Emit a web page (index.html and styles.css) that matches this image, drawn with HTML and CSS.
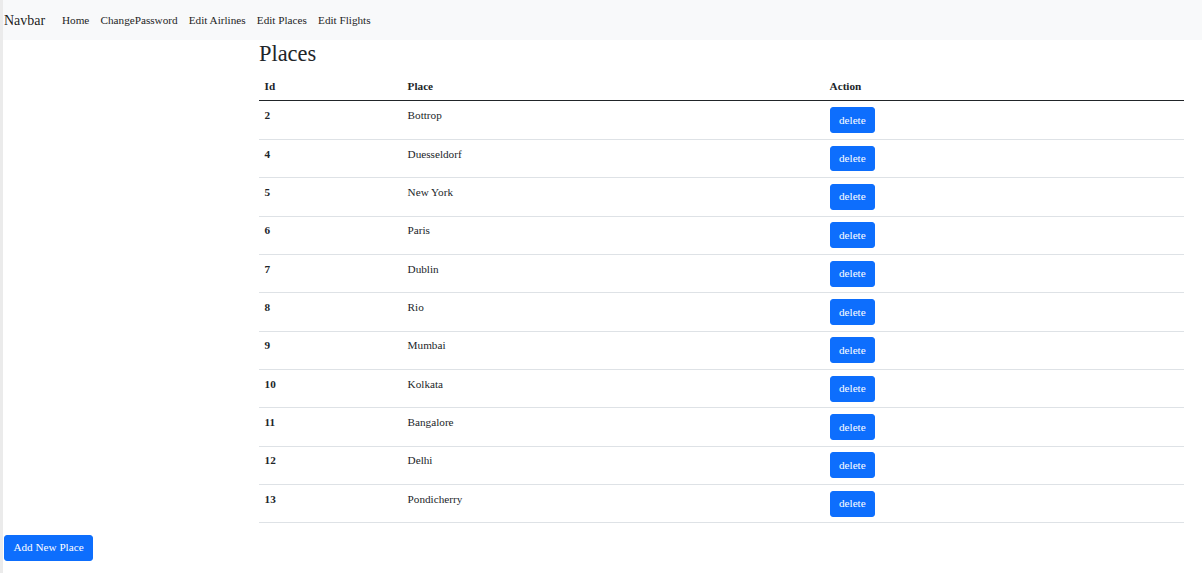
FILE: index.html
```html
<!DOCTYPE html>
<html lang="en">
<head>
<meta charset="utf-8">
<title>Places</title>
<link rel="stylesheet" href="styles.css">
</head>
<body>
<div class="page">
  <nav class="navbar">
    <a class="brand" href="#">Navbar</a>
    <ul class="nav-links">
      <li><a href="#">Home</a></li>
      <li><a href="#">ChangePassword</a></li>
      <li><a href="#">Edit Airlines</a></li>
      <li><a href="#">Edit Places</a></li>
      <li><a href="#">Edit Flights</a></li>
    </ul>
  </nav>
  <main class="content">
    <h2 class="title">Places</h2>
    <table class="table">
      <colgroup>
        <col class="col-id">
        <col class="col-place">
        <col class="col-action">
      </colgroup>
      <thead>
        <tr><th>Id</th><th>Place</th><th>Action</th></tr>
      </thead>
      <tbody>
        <tr><th>2</th><td>Bottrop</td><td><button class="btn">delete</button></td></tr>
        <tr><th>4</th><td>Duesseldorf</td><td><button class="btn">delete</button></td></tr>
        <tr><th>5</th><td>New York</td><td><button class="btn">delete</button></td></tr>
        <tr><th>6</th><td>Paris</td><td><button class="btn">delete</button></td></tr>
        <tr><th>7</th><td>Dublin</td><td><button class="btn">delete</button></td></tr>
        <tr><th>8</th><td>Rio</td><td><button class="btn">delete</button></td></tr>
        <tr><th>9</th><td>Mumbai</td><td><button class="btn">delete</button></td></tr>
        <tr><th>10</th><td>Kolkata</td><td><button class="btn">delete</button></td></tr>
        <tr><th>11</th><td>Bangalore</td><td><button class="btn">delete</button></td></tr>
        <tr><th>12</th><td>Delhi</td><td><button class="btn">delete</button></td></tr>
        <tr><th>13</th><td>Pondicherry</td><td><button class="btn">delete</button></td></tr>
      </tbody>
    </table>
  </main>
  <div class="actions">
    <button class="btn">Add New Place</button>
  </div>
</div>
</body>
</html>
```

FILE: styles.css
```css
html, body {
  margin: 0;
  padding: 0;
  background: #fff;
}

body {
  font-family: "Liberation Serif", "Times New Roman", serif;
  font-size: 11.2px;
  line-height: 1.5;
  color: #212529;
}

.page {
  min-height: 573px;
  border-left: 3px solid #ebebeb;
  box-sizing: border-box;
}

.navbar {
  display: flex;
  align-items: center;
  height: 40px;
  background: #f8f9fa;
  padding-left: 1px;
}

.brand {
  font-size: 14px;
  line-height: 21px;
  color: rgba(0, 0, 0, 0.9);
  text-decoration: none;
  margin-right: 11.2px;
}

.nav-links {
  display: flex;
  list-style: none;
  margin: 0;
  padding: 0;
}

.nav-links a {
  display: block;
  padding: 5.6px 5.6px;
  color: #1e1e1e;
  text-decoration: none;
}

.content {
  margin-left: 256px;
  width: 925px;
}

.title {
  margin: 0 0 4.6px 0;
  padding-top: 1px;
  font-size: 22.4px;
  font-weight: 400;
  line-height: 1.2;
}

.table {
  width: 100%;
  border-collapse: collapse;
  margin-bottom: 11.2px;
  vertical-align: top;
}

.col-id { width: 143px; }
.col-place { width: 422px; }
.col-action { width: 360px; }

.table th,
.table td {
  text-align: left;
  padding: 5.6px;
  border-bottom: 1px solid #dee2e6;
  vertical-align: top;
}

.table thead th {
  border-bottom: 1.5px solid #212529;
}

.table tbody th,
.table tbody td {
  padding-top: 5.7px;
  padding-bottom: 5.7px;
}

.btn {
  display: inline-block;
  font-family: inherit;
  font-size: 11.2px;
  line-height: 16.8px;
  color: #fff;
  background: #0d6efd;
  border: 1px solid #0d6efd;
  border-radius: 3px;
  padding: 3.6px 8.4px;
  cursor: pointer;
  vertical-align: top;
}

.actions {
  padding-left: 1px;
}
```
